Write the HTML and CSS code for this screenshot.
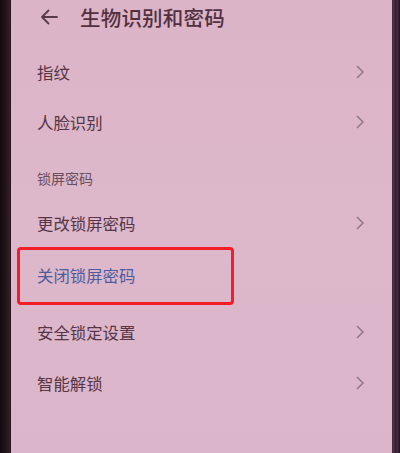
FILE: index.html
```html
<!DOCTYPE html>
<html lang="zh">
<head>
<meta charset="utf-8">
<link rel="stylesheet" href="styles.css">
</head>
<body>
<div class="frame">
  <div class="screen">
    <div class="header">
      <svg class="back" width="18" height="16" viewBox="0 0 18 16"><path d="M17 8H2M8.5 1.5L2 8l6.5 6.5" fill="none" stroke="#5a3a4a" stroke-width="1.8" stroke-linecap="round" stroke-linejoin="round"/></svg>
      <span class="title">生物识别和密码</span>
    </div>
    <div class="row r1"><span>指纹</span><svg class="chev" width="8" height="14" viewBox="0 0 8 14"><path d="M1 1l6 6-6 6" fill="none" stroke="#8f7585" stroke-width="1.5"/></svg></div>
    <div class="row r2"><span>人脸识别</span><svg class="chev" width="8" height="14" viewBox="0 0 8 14"><path d="M1 1l6 6-6 6" fill="none" stroke="#8f7585" stroke-width="1.5"/></svg></div>
    <div class="section">锁屏密码</div>
    <div class="row r3"><span>更改锁屏密码</span><svg class="chev" width="8" height="14" viewBox="0 0 8 14"><path d="M1 1l6 6-6 6" fill="none" stroke="#8f7585" stroke-width="1.5"/></svg></div>
    <div class="row r4 highlight"><span class="link">关闭锁屏密码</span></div>
    <div class="row r5"><span>安全锁定设置</span><svg class="chev" width="8" height="14" viewBox="0 0 8 14"><path d="M1 1l6 6-6 6" fill="none" stroke="#8f7585" stroke-width="1.5"/></svg></div>
    <div class="row r6"><span>智能解锁</span><svg class="chev" width="8" height="14" viewBox="0 0 8 14"><path d="M1 1l6 6-6 6" fill="none" stroke="#8f7585" stroke-width="1.5"/></svg></div>
  </div>
  <div class="edge"></div>
</div>
</body>
</html>
```
FILE: styles.css
```css
html, body {
  margin: 0;
  padding: 0;
  background: #1c1016;
}
body {
  width: 400px;
  height: 453px;
  overflow: hidden;
  font-family: "Noto Sans CJK SC", "Noto Sans", sans-serif;
}
.frame {
  display: flex;
  height: 453px;
  padding-left: 11px;
  background: linear-gradient(90deg, #140a10 0, #24141c 6px, #3a1c2a 10px, #1c1016 11px);
}
.screen {
  width: 381px;
  height: 453px;
  background: linear-gradient(180deg, #dcb4c8 0%, #ddb7ca 50%, #dbb5c9 100%);
  color: #553546;
}
.edge {
  width: 8px;
  background: linear-gradient(90deg, #3a2030 0, #5a3a55 2px, #2a1622 3px, #4a2c44 5px, #20101a 8px);
}
.header {
  height: 34px;
  display: flex;
  align-items: center;
  padding-left: 29px;
}
.back {
  margin-right: 22px;
}
.title {
  font-size: 20.5px;
  font-weight: 500;
  color: #52303f;
  letter-spacing: 0.2px;
}
.row {
  display: flex;
  align-items: center;
  justify-content: space-between;
  padding: 0 28px 0 26px;
  font-size: 16.4px;
  position: relative;
}
.r1 { height: 50px; margin-top: 13px; }
.r2 { height: 50px; }
.r3 { height: 46px; }
.r4 { height: 58px; }
.r5 { height: 56px; }
.r6 { height: 46px; }
.section {
  height: 53px;
  display: flex;
  align-items: flex-end;
  padding: 0 0 12px 26px;
  box-sizing: border-box;
  font-size: 14px;
  color: #6b4e5e;
}
.link {
  color: #4f5c9c;
}
.highlight::after {
  content: "";
  position: absolute;
  left: 6px;
  top: 1px;
  width: 211px;
  height: 52px;
  border: 3px solid #f51e28;
  border-radius: 4px;
}
.chev {
  display: block;
}
```
